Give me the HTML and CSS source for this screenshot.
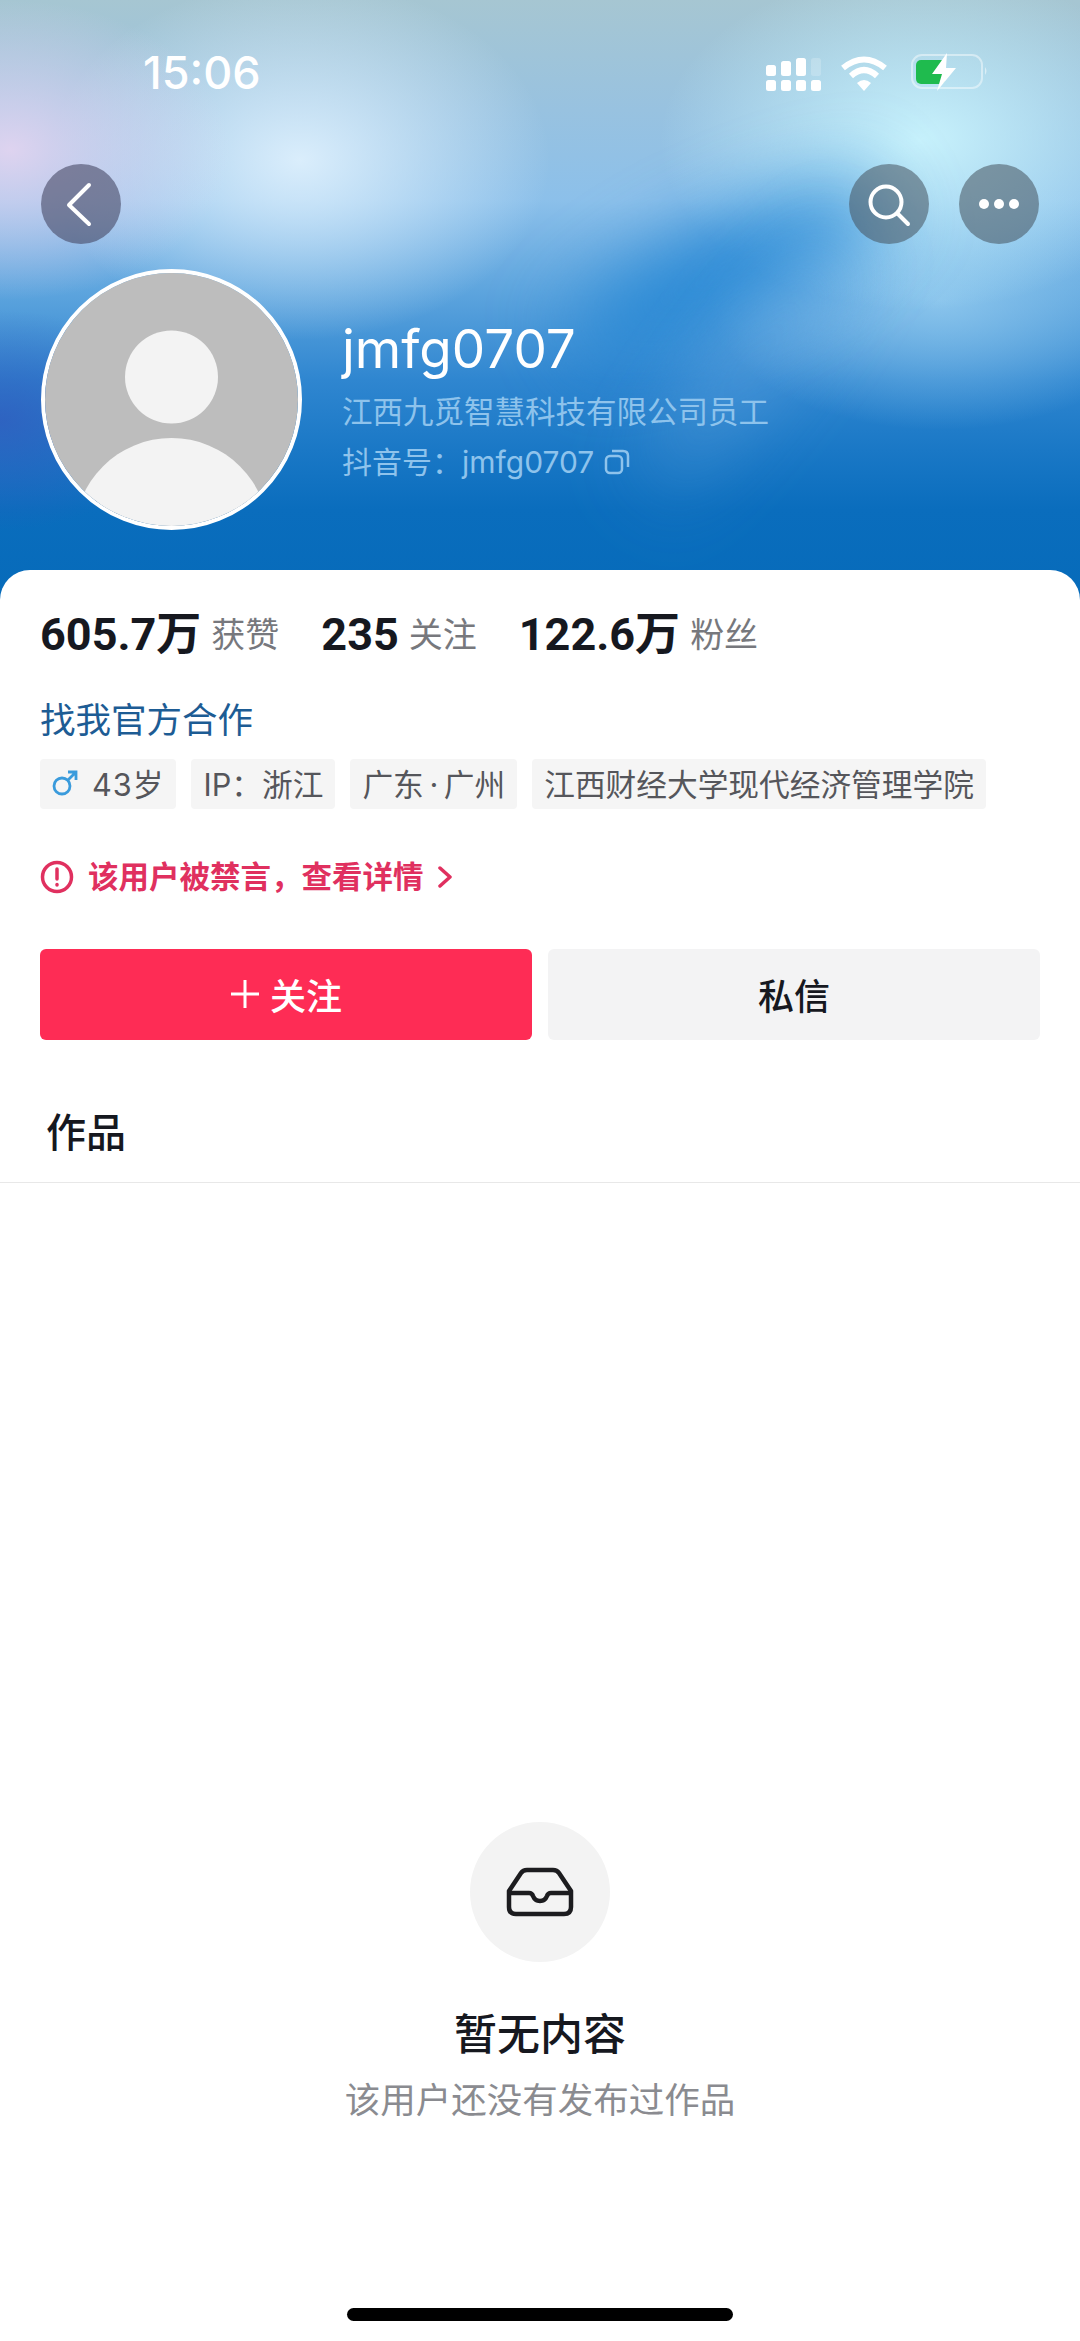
FILE: index.html
```html
<!DOCTYPE html>
<html lang="zh-CN">
<head>
    <meta charset="UTF-8">
    <meta name="viewport" content="width=device-width, initial-scale=1.0">
    <title>jmfg0707</title>
    <link rel="stylesheet" href="styles.css">
</head>
<body>

<!-- Blue header -->
<div class="header">
    <div class="status-bar">
        <div class="time">15:06</div>
        <div class="status-icons">
            <svg class="signal" width="55" height="42" viewBox="0 0 55 42" fill="#fff">
                <rect x="0" y="29" width="10" height="11" rx="2.500"/>
                <rect x="15" y="29" width="10" height="11" rx="2.500"/>
                <rect x="30" y="29" width="10" height="11" rx="2.500"/>
                <rect x="45" y="29" width="10" height="11" rx="2.500"/>
                <rect x="0" y="14" width="10" height="11" rx="2.500"/>
                <rect x="15" y="10" width="10" height="15" rx="2.500"/>
                <rect x="30" y="7" width="10" height="18" rx="2.500"/>
                <rect x="45" y="7" width="10" height="18" rx="2.500" opacity="0.2"/>
            </svg>
            <svg class="wifi" width="48" height="36" viewBox="0 0 48 36" fill="none" stroke="#fff" stroke-width="6">
                <path d="M3 13 Q24 -4 45 13"/>
                <path d="M11 21 Q24 9 37 21"/>
                <path d="M17 28 L24 36 L31 28 Q24 22 17 28 Z" fill="#fff" stroke="none"/>
            </svg>
            <svg class="battery" width="78" height="40" viewBox="0 0 78 40" fill="none">
                <rect x="1" y="4" width="70" height="33" rx="10" stroke="#fff" stroke-opacity="0.45" stroke-width="2"/>
                <path d="M74 16 Q77 20 74 24 Z" fill="#fff" fill-opacity="0.5"/>
                <rect x="5" y="9" width="29" height="24" rx="5" fill="#1fbb4e"/>
                <path d="M36 2 L21 23 H31 L26 40 L45 17 H35 Z" fill="#fff"/>
            </svg>
        </div>
    </div>

    <div class="nav-row">
        <div class="round-btn back-btn">
            <svg width="80" height="80" viewBox="0 0 80 80" fill="none" stroke="#fff" stroke-width="4" stroke-linecap="round" stroke-linejoin="round">
                <path d="M48 21 L28 41 L48 60"/>
            </svg>
        </div>
        <div class="nav-right">
            <div class="round-btn">
                <svg width="80" height="80" viewBox="0 0 80 80" fill="none" stroke="#fff" stroke-width="4" stroke-linecap="round">
                    <circle cx="37" cy="38" r="15.500"/>
                    <path d="M49 50 L59 60"/>
                </svg>
            </div>
            <div class="round-btn">
                <svg width="80" height="80" viewBox="0 0 80 80" fill="#fff">
                    <circle cx="25" cy="40" r="5"/>
                    <circle cx="40" cy="40" r="5"/>
                    <circle cx="55" cy="40" r="5"/>
                </svg>
            </div>
        </div>
    </div>

    <div class="profile-row">
        <div class="avatar">
            <svg width="253" height="253" viewBox="0 0 253 253">
                <rect width="253" height="253" fill="#bdbdbd"/>
                <circle cx="126.500" cy="104" r="46.500" fill="#f3f3f3"/>
                <ellipse cx="126.500" cy="262" rx="97" ry="97" fill="#f3f3f3"/>
            </svg>
        </div>
        <div class="profile-text">
            <div class="name">jmfg0707</div>
            <div class="sub">江西九觅智慧科技有限公司员工</div>
            <div class="sub id-line">
                <span>抖音号：jmfg0707</span>
                <svg width="26" height="26" viewBox="0 0 26 26" fill="none" stroke="#8ec3ec" stroke-width="2.500">
                    <rect x="2" y="7" width="16" height="17" rx="4"/>
                    <path d="M8 2 H19 Q24 2 24 7 V18"/>
                </svg>
            </div>
        </div>
    </div>
</div>

<!-- White card -->
<div class="card">
    <div class="card-inner">
        <div class="stats">
            <div class="stat"><strong>605.7万</strong><span>获赞</span></div>
            <div class="stat"><strong>235</strong><span>关注</span></div>
            <div class="stat"><strong>122.6万</strong><span>粉丝</span></div>
        </div>

        <div class="partner">找我官方合作</div>

        <div class="tags">
            <div class="tag">
                <svg width="26" height="26" viewBox="0 0 26 26" fill="none" stroke="#3a9bdc" stroke-width="2.800">
                    <circle cx="10" cy="16" r="8"/>
                    <path d="M16 10 L24 2 M16 2 H24 V10"/>
                </svg>
                <span class="age">43岁</span>
            </div>
            <div class="tag">IP：浙江</div>
            <div class="tag">广东 · 广州</div>
            <div class="tag">江西财经大学现代经济管理学院</div>
        </div>

        <div class="warning">
            <svg width="34" height="34" viewBox="0 0 34 34" fill="none" stroke="#e0305f" stroke-width="3.500" stroke-linecap="round">
                <circle cx="17" cy="17" r="14.500"/>
                <path d="M17 9 V19"/>
                <path d="M17 24.500 V25"/>
            </svg>
            <span>该用户被禁言，查看详情</span>
            <svg width="14" height="24" viewBox="0 0 14 24" fill="none" stroke="#e0305f" stroke-width="3.500" stroke-linecap="round" stroke-linejoin="round">
                <path d="M2 3 L12 12 L2 21"/>
            </svg>
        </div>

        <div class="buttons">
            <div class="btn btn-follow">
                <svg width="30" height="30" viewBox="0 0 30 30" stroke="#fff" stroke-width="3">
                    <path d="M15 1 V29 M1 15 H29"/>
                </svg>
                <span>关注</span>
            </div>
            <div class="btn btn-message">私信</div>
        </div>

        <div class="tab-title">作品</div>
    </div>

    <div class="divider"></div>

    <div class="empty">
        <div class="empty-circle">
            <svg width="70" height="50" viewBox="0 0 70 50" fill="none" stroke="#1c1c1f" stroke-width="4.500" stroke-linejoin="round">
                <path d="M4 24 L16 6 Q18 3 22 3 H48 Q52 3 54 6 L66 24 V40 Q66 47 59 47 H11 Q4 47 4 40 Z"/>
                <path d="M4 26 H24 Q27 26 28 29 Q30 34 35 34 Q40 34 42 29 Q43 26 46 26 H66"/>
            </svg>
        </div>
        <div class="empty-title">暂无内容</div>
        <div class="empty-sub">该用户还没有发布过作品</div>
    </div>

    <div class="home-bar"></div>
</div>

</body>
</html>
```

FILE: styles.css
```css
body {
    margin: 0;
    padding: 0;
    background-color: #fff;
    font-family: "Inter", "Noto Sans CJK SC", sans-serif;
    color: #16181f;
}

/* Header */
.header {
    height: 600px;
    box-sizing: border-box;
    padding: 0 41px;
    position: relative;
    overflow: hidden;
    background:
        radial-gradient(ellipse 220px 150px at 10px 150px, rgba(226, 212, 240, 0.95), rgba(226, 212, 240, 0) 100%),
        radial-gradient(ellipse 250px 180px at 300px 160px, rgba(222, 240, 253, 0.95), rgba(222, 240, 253, 0) 100%),
        radial-gradient(ellipse 260px 170px at 920px 140px, rgba(200, 242, 252, 1), rgba(200, 242, 252, 0) 100%),
        radial-gradient(ellipse 230px 130px at 940px 300px, rgba(150, 205, 240, 0.8), rgba(150, 205, 240, 0) 100%),
        radial-gradient(ellipse 170px 110px at 0px 420px, rgba(50, 90, 190, 0.75), rgba(50, 90, 190, 0) 100%),
        linear-gradient(180deg, #a6c6d2 0px, #98c2e0 110px, #8cc0ea 200px, #5ea5de 290px, #2f86d0 380px, #1a78c6 450px, #0a6dbd 510px, #066bba 600px);
}

/* Soft streaks in the wallpaper */
.header::before,
.header::after {
    content: "";
    position: absolute;
    border-radius: 50%;
    filter: blur(40px);
}

.header::before {
    left: 560px;
    top: 225px;
    width: 340px;
    height: 90px;
    background-color: rgba(23, 128, 210, 0.85);
    transform: rotate(-25deg);
}

.header::after {
    left: 590px;
    top: 340px;
    width: 320px;
    height: 50px;
    background-color: rgba(140, 190, 235, 0.4);
    transform: rotate(-52deg);
}

.status-bar,
.nav-row,
.profile-row {
    position: relative;
    z-index: 1;
}

.status-bar {
    height: 164px;
    box-sizing: border-box;
    padding: 51px 0 0 102px;
    display: flex;
    justify-content: space-between;
    align-items: flex-start;
}

.time {
    font-size: 45px;
    line-height: 44px;
    font-weight: 500;
    color: #fff;
}

.status-icons {
    display: flex;
    align-items: flex-start;
    margin-right: 50px;
}

.wifi {
    margin: 4px 23px 0 19px;
}

.nav-row {
    display: flex;
    justify-content: space-between;
    height: 80px;
}

.nav-right {
    display: flex;
    gap: 30px;
}

.round-btn {
    width: 80px;
    height: 80px;
    border-radius: 50%;
    background-color: rgba(70, 82, 92, 0.55);
}

.back-btn {
    background-color: rgba(70, 72, 100, 0.6);
}

.round-btn svg {
    display: block;
}

/* Avatar and name */
.profile-row {
    display: flex;
    align-items: flex-start;
    gap: 40px;
    margin-top: 25px;
}

.avatar {
    width: 253px;
    height: 253px;
    border: 4px solid #fff;
    border-radius: 50%;
    overflow: hidden;
    flex-shrink: 0;
}

.avatar svg {
    display: block;
}

.profile-text {
    padding-top: 49px;
}

.name {
    font-size: 53px;
    line-height: 62px;
    color: #fff;
}

.sub {
    font-size: 30.500px;
    line-height: 44px;
    margin-top: 10px;
    color: #8ec3ec;
}

.id-line {
    display: flex;
    align-items: center;
    gap: 10px;
    margin-top: 6px;
    font-size: 30px;
}

/* Card */
.card {
    margin-top: -30px;
    position: relative;
    background-color: #fff;
    border-radius: 30px 30px 0 0;
}

.card-inner {
    padding: 40px 40px 0;
}

.stats {
    display: flex;
    gap: 42px;
    height: 50px;
    align-items: center;
}

.stat {
    display: flex;
    align-items: center;
    gap: 10px;
}

.stat strong {
    font-family: "Roboto", "Noto Sans CJK SC", sans-serif;
    font-size: 45px;
    line-height: 50px;
    font-weight: 700;
}

.stat span {
    font-size: 34px;
    line-height: 50px;
    color: #77787d;
}

.partner {
    margin-top: 39px;
    font-size: 35.500px;
    line-height: 44px;
    color: #1d5c94;
}

.tags {
    display: flex;
    gap: 15px;
    margin-top: 16px;
}

.tag {
    height: 50px;
    box-sizing: border-box;
    padding: 0 12px 3px;
    display: flex;
    align-items: center;
    gap: 14px;
    background-color: #f5f5f5;
    border-radius: 4px;
    font-size: 30.700px;
    word-spacing: -3px;
    color: #55565b;
    white-space: nowrap;
}

.tag .age {
    letter-spacing: 1px;
}

.warning {
    display: flex;
    align-items: center;
    height: 40px;
    box-sizing: border-box;
    margin-top: 48px;
    gap: 14px;
    font-size: 30.500px;
    font-weight: 700;
    color: #e0305f;
}

.warning span {
    margin-bottom: 4px;
}

.buttons {
    display: flex;
    gap: 16px;
    margin-top: 52px;
}

.btn {
    flex: 1;
    height: 91px;
    box-sizing: border-box;
    padding-bottom: 2px;
    display: flex;
    align-items: center;
    justify-content: center;
    gap: 10px;
    border-radius: 6px;
    font-size: 36px;
    font-weight: 500;
}

.btn-follow {
    background-color: #fe2c55;
    color: #fff;
}

.btn-message {
    background-color: #f3f3f4;
    color: #16181f;
}

.tab-title {
    margin: 71px 0 27px 6px;
    font-size: 40px;
    line-height: 44px;
    font-weight: 500;
}

.divider {
    height: 1px;
    background-color: #e8e8e8;
}

/* Empty state */
.empty {
    display: flex;
    flex-direction: column;
    align-items: center;
    margin-top: 639px;
}

.empty-circle {
    width: 140px;
    height: 140px;
    border-radius: 50%;
    background-color: #f3f3f3;
    display: flex;
    align-items: center;
    justify-content: center;
}

.empty-title {
    margin-top: 44px;
    font-size: 43px;
    line-height: 56px;
    font-weight: 500;
}

.empty-sub {
    margin-top: 17px;
    font-size: 35.500px;
    line-height: 44px;
    color: #8a8b90;
}

.home-bar {
    width: 386px;
    height: 13px;
    margin: 185px auto 0;
    border-radius: 7px;
    background-color: #000;
}
```
